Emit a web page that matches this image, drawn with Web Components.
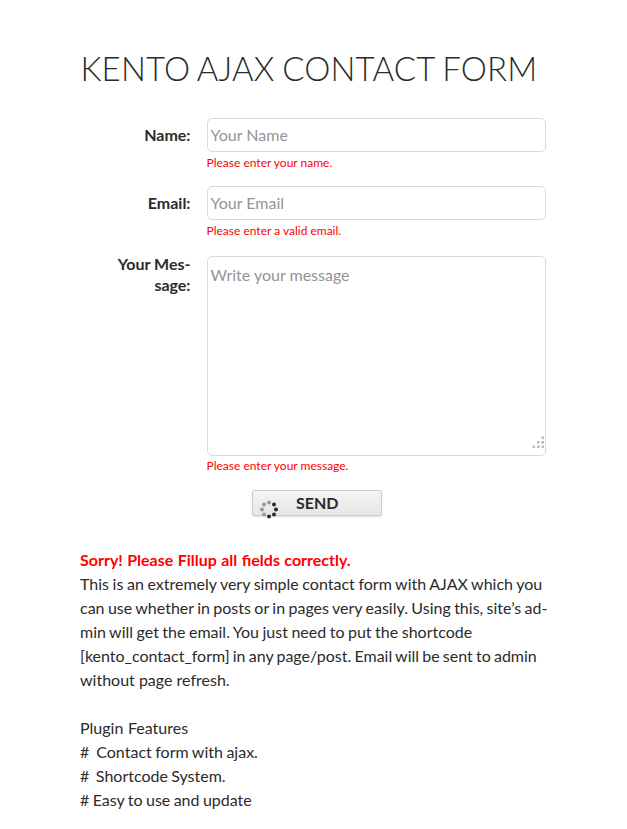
<!DOCTYPE html>
<html lang="en"><head><meta charset="utf-8"><title>Kento Ajax Contact Form</title>
<style>body{margin:0;background:#fff;color:#2b2b2b;font:16px/24px Lato,sans-serif;}</style></head><body>
<contact-page></contact-page>
<script>
class FormRow extends HTMLElement{constructor(){super();this.attachShadow({mode:'open'}).innerHTML=`<style>
:host{display:grid;grid-template-columns:110.5px 339px;column-gap:16.5px;align-items:start}
.label{font-weight:700;text-align:right;line-height:21px;margin-top:var(--label-top,6px);white-space:pre-line}
.box{box-sizing:border-box;border:1px solid #d9d9d9;border-radius:5px;height:var(--box-height,34px);padding:var(--text-top,5px) 3px 0 2.5px;color:#949494;line-height:22px;position:relative}
.error{font-size:12px;line-height:var(--error-line,22px);color:#f00;margin-left:-.5px}
svg{position:absolute;right:0;bottom:6px}
</style><div class="label"><slot name="label"></slot></div><div><div class="box"><slot></slot>${this.hasAttribute('multiline')?'<svg width="13" height="13" fill="#bbb"><path d="M9.500 .5h2.500V3H9.500zM5 5h2.500v2.500H5zM9.500 5h2.500v2.500H9.500zM.5 9.500H3V12H.5zM5 9.500h2.500V12H5zM9.500 9.500h2.500V12H9.500z"/></svg>':''}</div><div class="error"><slot name="error"></slot></div></div>`}}
customElements.define('form-row',FormRow);
class SendButton extends HTMLElement{constructor(){super();this.attachShadow({mode:'open'}).innerHTML=`<style>
:host{box-sizing:border-box;display:flex;align-items:flex-start;width:130px;height:26px;border:1px solid #ccc;border-radius:2px;background:linear-gradient(#f4f4f4,#e6e6e6);box-shadow:0 1px 2px rgba(0,0,0,.12);font-weight:700;padding-left:7px;gap:17px}
svg{margin-top:9px;flex:none}</style><svg width="19" height="19" viewBox="0 0 19 19"><g fill="#999"><circle cx="9" cy="2.500" r="2"/><circle cx="4" cy="4.500" r="2"/><circle cx="2" cy="9.500" r="2"/><circle cx="4" cy="14.500" r="2"/></g><g fill="#2b2b2b"><circle cx="14" cy="4.500" r="2"/><circle cx="16" cy="9.500" r="2"/><circle cx="14" cy="14.500" r="2"/><circle cx="9" cy="16.500" r="2"/></g></svg><slot></slot>`}}
customElements.define('send-button',SendButton);
class ContactPage extends HTMLElement{constructor(){super();this.attachShadow({mode:'open'}).innerHTML=`<style>
:host{display:block;padding:50px 0 0 80px}
h1{font-size:33px;line-height:36px;font-weight:300;margin:0 0 32px .5px;white-space:nowrap;word-spacing:-1.5px;letter-spacing:.16px}
form-row{height:68px}
.message{--box-height:200px;--label-top:-3px;--text-top:7px;--error-line:20px;height:234px;margin-top:2px}
send-button{margin-left:172px}
.copy{margin-top:32px;white-space:pre}
.copy div{min-height:24px}
strong{color:#f00;word-spacing:.5px}
</style><h1>KENTO AJAX CONTACT FORM</h1>
<form-row><span slot="label">Name:</span>Your Name<span slot="error">Please enter your name.</span></form-row>
<form-row><span slot="label">Email:</span>Your Email<span slot="error">Please enter a valid email.</span></form-row>
<form-row class="message" multiline><span slot="label">Your Mes-
sage:</span>Write your message<span slot="error">Please enter your message.</span></form-row>
<send-button>SEND</send-button>
<div class="copy"><div><strong>Sorry! Please Fillup all fields correctly.</strong></div><div style="word-spacing:-.5px">This is an extremely very simple contact form with AJAX which you</div><div style="word-spacing:-.7px">can use whether in posts or in pages very easily. Using this, site’s ad-</div><div style="word-spacing:-.6px">min will get the email. You just need to put the shortcode</div><div style="word-spacing:-.9px">[kento_contact_form] in any page/post. Email will be sent to admin</div><div>without page refresh.</div><div></div><div style="word-spacing:.5px">Plugin Features</div><div style="word-spacing:-.6px">#  Contact form with ajax.</div><div style="word-spacing:-.8px">#  Shortcode System.</div><div style="word-spacing:-.7px"># Easy to use and update</div></div>`}}
customElements.define('contact-page',ContactPage);
</script></body></html>
